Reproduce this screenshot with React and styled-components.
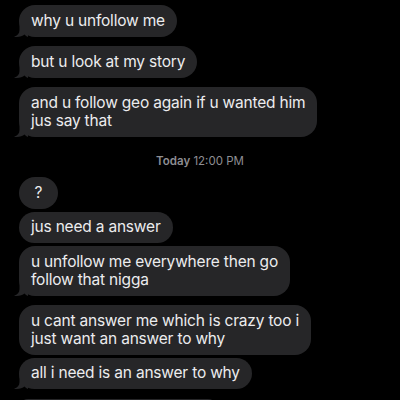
import styled, { createGlobalStyle } from "styled-components";

const GlobalStyle = createGlobalStyle`
    html, body {
        margin: 0;
        padding: 0;
        background: #000;
    }
    body {
        font-family: Inter, "Liberation Sans", sans-serif;
        -webkit-font-smoothing: antialiased;
    }
`;

// last one is cut off by the bottom edge, only its top shows
const messages = [
    { lines: ["why u unfollow me"], tail: true },
    { lines: ["but u look at my story"], tail: true },
    { lines: ["and u follow geo again if u wanted him", "jus say that"], tail: true },
    { stamp: true },
    { lines: ["?"], small: true },
    { lines: ["jus need a answer"] },
    { lines: ["u unfollow me everywhere then go", "follow that nigga"], tail: true },
    { lines: ["u cant answer me which is crazy too i", "just want an answer to why"] },
    { lines: ["all i need is an answer to why"], tail: true },
    { lines: [], width: 198 },
];

const Tail = () => (
    <TailSvg width="14" height="18" viewBox="0 0 14 18">
        <path
            d="M5.5 0 L5.5 11 C5.5 14.5 3.5 16.8 0 17.8 C4.5 18.4 8.5 17.3 10.5 15.6 C11.5 16.8 12.6 17.5 14 17.9 L14 0 Z"
            fill="#262628"
        />
    </TailSvg>
);

const App = () => {
    return (
        <Screen>
            <GlobalStyle />
            {messages.map((m, i) => {
                if (m.stamp) {
                    return (
                        <Stamp key={i}>
                            <b>Today</b> 12:00 PM
                        </Stamp>
                    );
                }
                return (
                    <Bubble key={i} $tail={m.tail} $small={m.small} $width={m.width}>
                        {m.lines.map((l, j) => (
                            <Line key={j}>{l}</Line>
                        ))}
                        {m.tail && <Tail />}
                    </Bubble>
                );
            })}
        </Screen>
    );
};

const Screen = styled.div`
    width: 400px;
    height: 400px;
    overflow: hidden;
    background: #000;
    padding: 5px 0 0 19px;
    box-sizing: border-box;
    display: flex;
    flex-direction: column;
    align-items: flex-start;
`;

const Bubble = styled.div`
    position: relative;
    background: #262628;
    color: #ececee;
    font-size: 15.5px;
    line-height: 18px;
    letter-spacing: -0.2px;
    border-radius: 16px;
    padding: 6.75px ${(p) => (p.$small ? "15.5px" : "12px")};
    margin-bottom: ${(p) => (p.$tail ? "9.5px" : "3px")};
    flex-shrink: 0;
    ${(p) => p.$width && `width: ${p.$width}px; min-height: 18px; box-sizing: border-box;`}
`;

const Line = styled.div`
    position: relative;
    z-index: 1;
    white-space: nowrap;
`;

const TailSvg = styled.svg`
    position: absolute;
    left: -5.5px;
    bottom: 0;
    display: block;
`;

const Stamp = styled.div`
    align-self: center;
    margin: 8px 0 9px -19px;
    font-size: 11.5px;
    line-height: 14px;
    color: #8e8e93;
    & > b {
        font-weight: 600;
    }
`;

export default App;
